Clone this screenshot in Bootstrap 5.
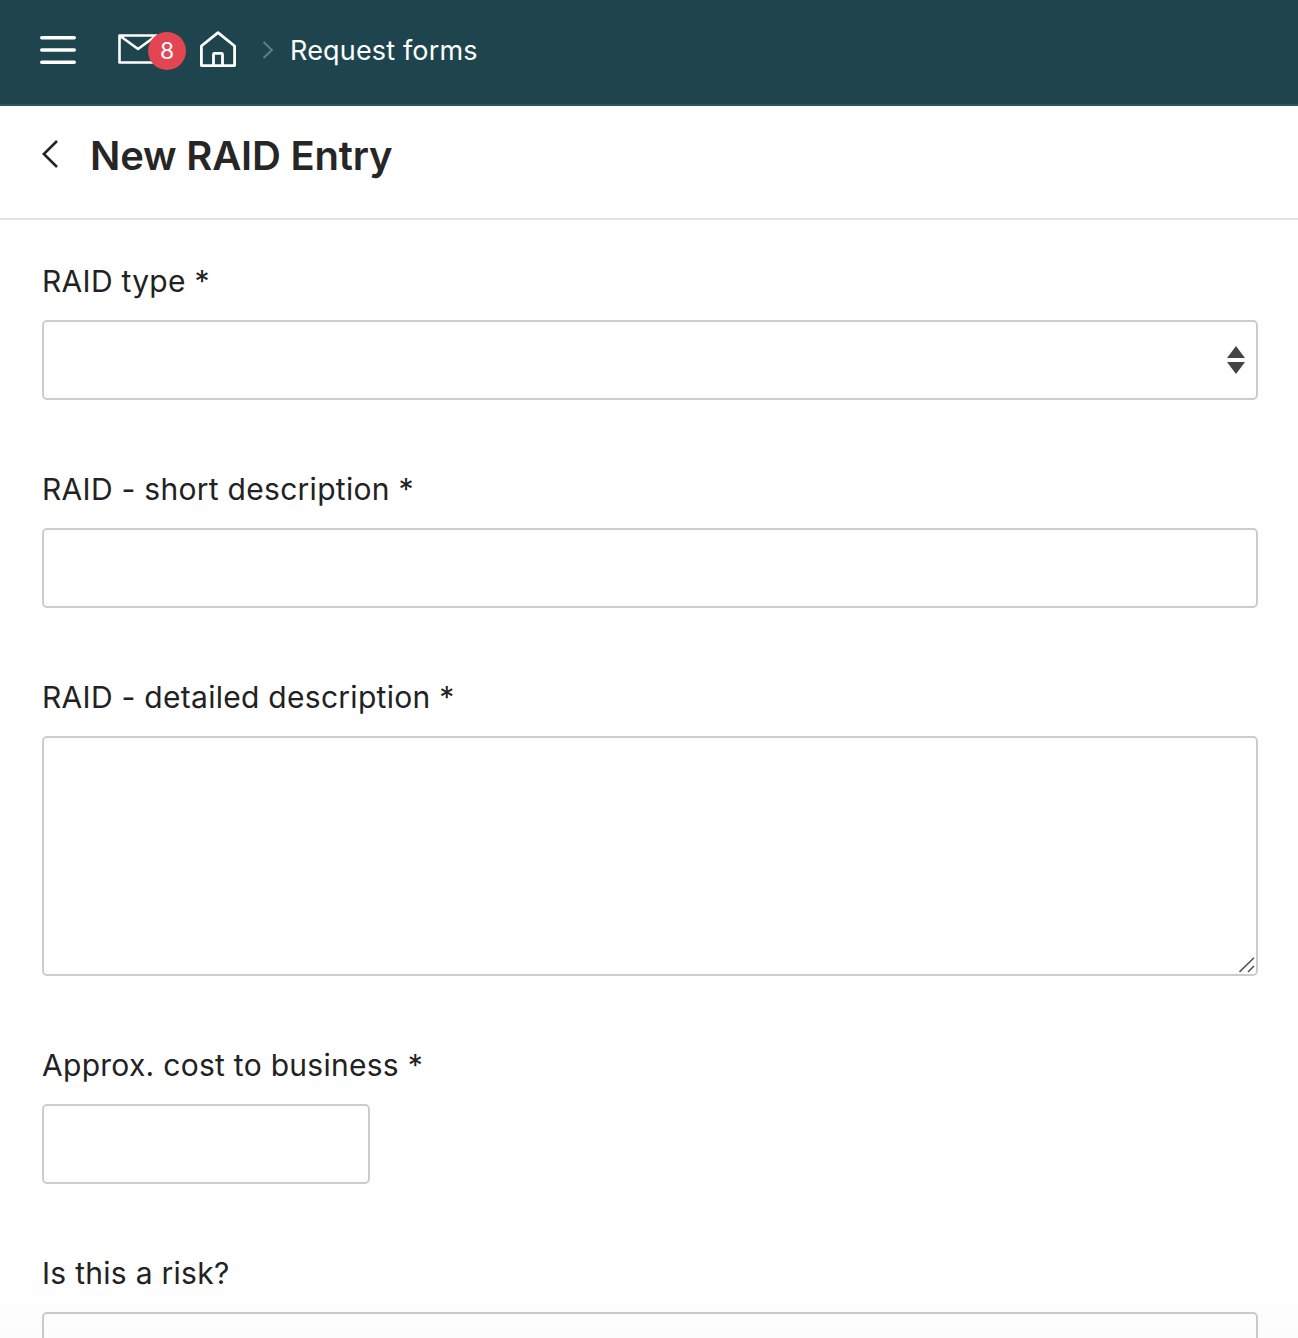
<!DOCTYPE html>
<html lang="en">
<head>
<meta charset="utf-8">
<title>New RAID Entry</title>
<link href="https://cdn.jsdelivr.net/npm/bootstrap@5.3.0/dist/css/bootstrap.min.css" rel="stylesheet">
<style>
html, body { height: 1338px; overflow: hidden; }
body { font-family: Inter, "Liberation Sans", sans-serif; color: #222; background: #fff; }
.topbar { height: 106px; background: #1e444e; border-bottom: 2px solid #2f545d; padding: 0 0 4px 40px; }
.topbar svg { display: block; flex: none; }
.mail-wrap { width: 68px; height: 40px; margin-left: 42px; }
.mail-wrap svg { margin-top: 2px; }
.mail-count { top: 2px; left: 30px; width: 38px; height: 38px; background: #e44552; color: #fff; font-size: 23px; line-height: 38px; text-align: center; }
.home-ico { margin: 0 0 3px 14px; }
.crumb-sep { margin-left: 26px; }
.crumb-text { margin: 2px 0 0 16px; color: #fff; font-size: 27px; letter-spacing: .17px; }
.titlebar { height: 114px; border-bottom: 2px solid #e4e4e4; padding: 0 0 12px 42px; }
.titlebar svg { flex: none; margin-bottom: 4px; }
.titlebar h1 { margin: 0 0 0 32px; font-size: 40px; font-weight: 600; letter-spacing: -.2px; color: #262626; }
.entry-form { padding: 39px 40px 0 42px; }
.entry-form .form-label { display: block; height: 44px; line-height: 44px; margin: 0 0 17px; font-size: 30px; letter-spacing: .28px; color: #222; }
.entry-form .field-box { margin-bottom: 67px; }
.entry-form .form-control, .entry-form .form-select { height: 80px; border: 2px solid #ccc; border-radius: 5px; box-shadow: none; }
.entry-form .form-select { background-image: url("data:image/svg+xml,%3Csvg xmlns='http://www.w3.org/2000/svg' width='18' height='30' viewBox='0 0 18 30'%3E%3Cpath fill='%23444' d='M9 1l9 12H0zM0 17h18L9 29z'/%3E%3C/svg%3E"); background-size: 18px 30px; background-position: right 11px center; background-repeat: no-repeat; }
.entry-form textarea.form-control { display: block; height: 240px; min-height: 240px; resize: none; }
.grip-mark { right: 3px; bottom: 3px; pointer-events: none; }
.cost-input { width: 328px; }
.page-fade { left: 0; right: 0; bottom: 0; height: 70px; background: linear-gradient(rgba(0,0,0,0), rgba(0,0,0,.012)); pointer-events: none; }
</style>
</head>
<body>
<nav class="topbar d-flex align-items-center">
  <svg width="36" height="28" viewBox="0 0 36 28" aria-hidden="true"><path d="M1.700 1.700h32.600M1.700 14h32.600M1.700 26.300h32.600" stroke="#fff" stroke-width="3.400" stroke-linecap="round" fill="none"/></svg>
  <div class="mail-wrap position-relative">
    <svg width="40" height="32" viewBox="0 0 40 32" aria-hidden="true"><path d="M1.500 3.500h37v27h-37zM1.500 3.500L20 17 38.500 3.500" fill="none" stroke="#fff" stroke-width="2.600" stroke-linejoin="round"/></svg>
    <span class="mail-count position-absolute rounded-circle">8</span>
  </div>
  <svg class="home-ico" width="36" height="36" viewBox="0 0 36 36" aria-hidden="true"><path d="M1.400 15L18 1.700 34.600 15v19.600H1.400zM13.500 34.600V23.400a1 1 0 0 1 1-1h7a1 1 0 0 1 1 1v11.200" fill="none" stroke="#fff" stroke-width="2.800" stroke-linejoin="round"/></svg>
  <svg class="crumb-sep" width="12" height="18" viewBox="0 0 12 18" aria-hidden="true"><path d="M1.500 1l8.500 8-8.500 8" fill="none" stroke="#66808a" stroke-width="1.800"/></svg>
  <span class="crumb-text">Request forms</span>
</nav>
<header class="titlebar d-flex align-items-center">
  <svg width="16" height="28" viewBox="0 0 16 28" aria-hidden="true"><path d="M15 1L1.800 14 15 27" fill="none" stroke="#222" stroke-width="2.600"/></svg>
  <h1>New RAID Entry</h1>
</header>
<form class="entry-form">
  <div class="field-box">
    <label class="form-label" for="f1">RAID type *</label>
    <select class="form-select" id="f1"><option></option></select>
  </div>
  <div class="field-box">
    <label class="form-label" for="f2">RAID - short description *</label>
    <input class="form-control" id="f2" type="text">
  </div>
  <div class="field-box">
    <label class="form-label" for="f3">RAID - detailed description *</label>
    <div class="position-relative">
      <textarea class="form-control" id="f3"></textarea>
      <svg class="grip-mark position-absolute" width="16" height="16" viewBox="0 0 16 16" aria-hidden="true"><path d="M0.500 15L15 0.700M9 15L15 9" stroke="#555" stroke-width="1.600" fill="none"/></svg>
    </div>
  </div>
  <div class="field-box">
    <label class="form-label" for="f4">Approx. cost to business *</label>
    <input class="form-control cost-input" id="f4" type="text">
  </div>
  <div class="field-box">
    <label class="form-label" for="f5">Is this a risk?</label>
    <select class="form-select" id="f5"><option></option></select>
  </div>
</form>
<div class="page-fade position-fixed"></div>
<script src="https://cdn.jsdelivr.net/npm/bootstrap@5.3.0/dist/js/bootstrap.bundle.min.js"></script>
</body>
</html>
